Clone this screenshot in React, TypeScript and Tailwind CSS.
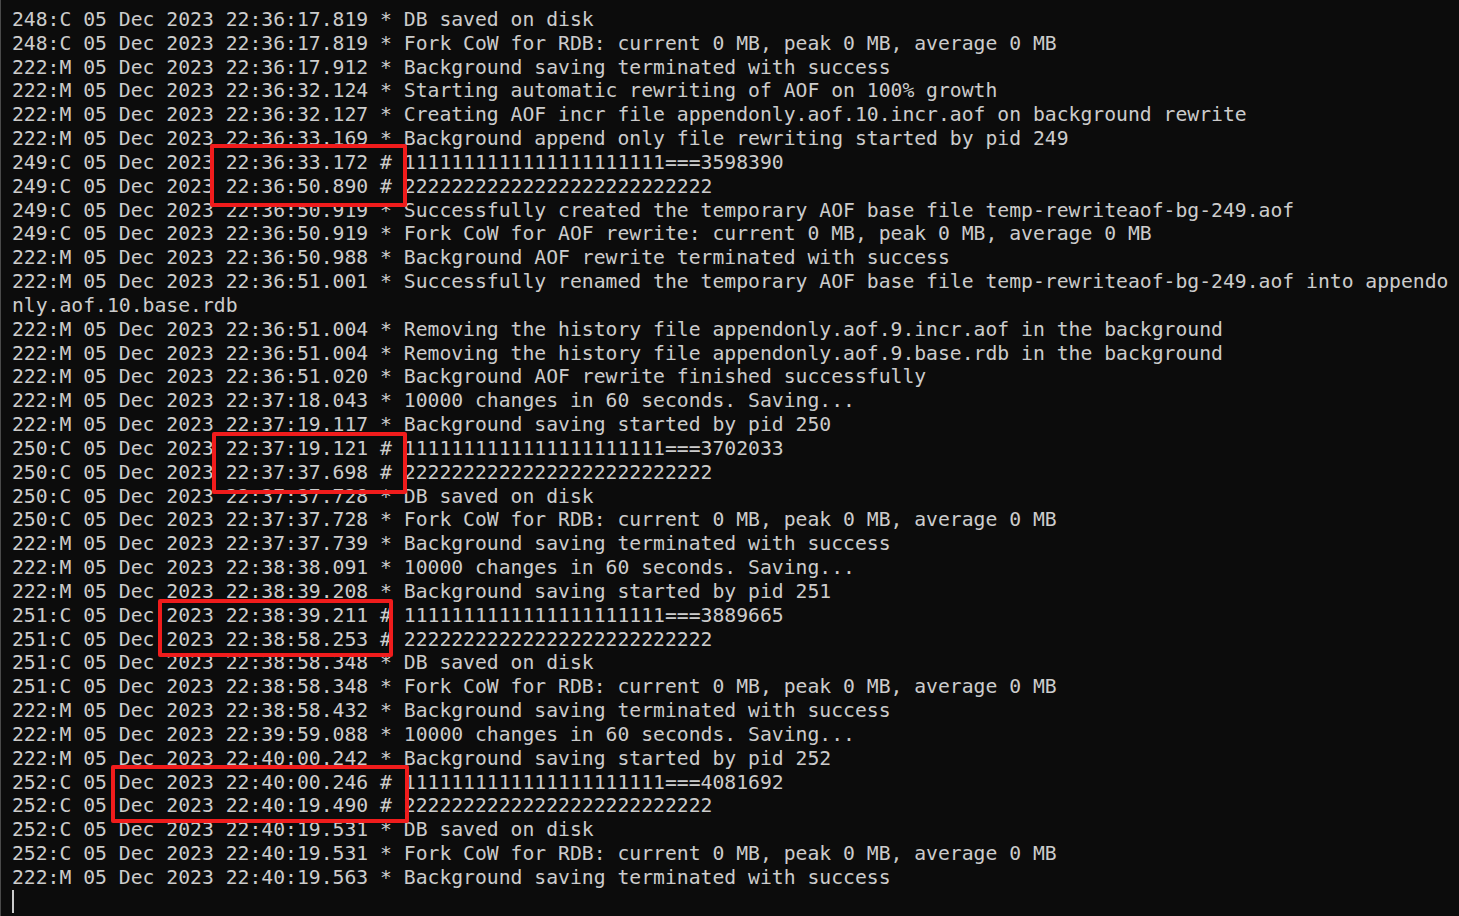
import React from 'react';

const lines: string[] = [
  '248:C 05 Dec 2023 22:36:17.819 * DB saved on disk',
  '248:C 05 Dec 2023 22:36:17.819 * Fork CoW for RDB: current 0 MB, peak 0 MB, average 0 MB',
  '222:M 05 Dec 2023 22:36:17.912 * Background saving terminated with success',
  '222:M 05 Dec 2023 22:36:32.124 * Starting automatic rewriting of AOF on 100% growth',
  '222:M 05 Dec 2023 22:36:32.127 * Creating AOF incr file appendonly.aof.10.incr.aof on background rewrite',
  '222:M 05 Dec 2023 22:36:33.169 * Background append only file rewriting started by pid 249',
  '249:C 05 Dec 2023 22:36:33.172 # 1111111111111111111111===3598390',
  '249:C 05 Dec 2023 22:36:50.890 # 22222222222222222222222222',
  '249:C 05 Dec 2023 22:36:50.919 * Successfully created the temporary AOF base file temp-rewriteaof-bg-249.aof',
  '249:C 05 Dec 2023 22:36:50.919 * Fork CoW for AOF rewrite: current 0 MB, peak 0 MB, average 0 MB',
  '222:M 05 Dec 2023 22:36:50.988 * Background AOF rewrite terminated with success',
  '222:M 05 Dec 2023 22:36:51.001 * Successfully renamed the temporary AOF base file temp-rewriteaof-bg-249.aof into appendo',
  'nly.aof.10.base.rdb',
  '222:M 05 Dec 2023 22:36:51.004 * Removing the history file appendonly.aof.9.incr.aof in the background',
  '222:M 05 Dec 2023 22:36:51.004 * Removing the history file appendonly.aof.9.base.rdb in the background',
  '222:M 05 Dec 2023 22:36:51.020 * Background AOF rewrite finished successfully',
  '222:M 05 Dec 2023 22:37:18.043 * 10000 changes in 60 seconds. Saving...',
  '222:M 05 Dec 2023 22:37:19.117 * Background saving started by pid 250',
  '250:C 05 Dec 2023 22:37:19.121 # 1111111111111111111111===3702033',
  '250:C 05 Dec 2023 22:37:37.698 # 22222222222222222222222222',
  '250:C 05 Dec 2023 22:37:37.728 * DB saved on disk',
  '250:C 05 Dec 2023 22:37:37.728 * Fork CoW for RDB: current 0 MB, peak 0 MB, average 0 MB',
  '222:M 05 Dec 2023 22:37:37.739 * Background saving terminated with success',
  '222:M 05 Dec 2023 22:38:38.091 * 10000 changes in 60 seconds. Saving...',
  '222:M 05 Dec 2023 22:38:39.208 * Background saving started by pid 251',
  '251:C 05 Dec 2023 22:38:39.211 # 1111111111111111111111===3889665',
  '251:C 05 Dec 2023 22:38:58.253 # 22222222222222222222222222',
  '251:C 05 Dec 2023 22:38:58.348 * DB saved on disk',
  '251:C 05 Dec 2023 22:38:58.348 * Fork CoW for RDB: current 0 MB, peak 0 MB, average 0 MB',
  '222:M 05 Dec 2023 22:38:58.432 * Background saving terminated with success',
  '222:M 05 Dec 2023 22:39:59.088 * 10000 changes in 60 seconds. Saving...',
  '222:M 05 Dec 2023 22:40:00.242 * Background saving started by pid 252',
  '252:C 05 Dec 2023 22:40:00.246 # 1111111111111111111111===4081692',
  '252:C 05 Dec 2023 22:40:19.490 # 22222222222222222222222222',
  '252:C 05 Dec 2023 22:40:19.531 * DB saved on disk',
  '252:C 05 Dec 2023 22:40:19.531 * Fork CoW for RDB: current 0 MB, peak 0 MB, average 0 MB',
  '222:M 05 Dec 2023 22:40:19.563 * Background saving terminated with success',
];

// red annotation boxes drawn over the log
const Marks = () => (
  <>
    <div className="absolute left-[209px] top-[144px] w-[197px] h-[63px] border-[4px] border-[#f01c1c] rounded-[2px]" />
    <div className="absolute left-[211px] top-[432px] w-[195px] h-[62px] border-[4px] border-[#f01c1c] rounded-[2px]" />
    <div className="absolute left-[157px] top-[599px] w-[235px] h-[58px] border-[4px] border-[#f01c1c] rounded-[2px]" />
    <div className="absolute left-[110px] top-[765px] w-[298px] h-[58px] border-[4px] border-[#f01c1c] rounded-[2px]" />
  </>
);

export default function App() {
  return (
    <div className="relative w-[1459px] h-[916px] overflow-hidden bg-[#0c0c0c] border-l border-[#4a4a4a]">
      <div
        className="pt-[8px] pl-[11px] text-[#cccccc] text-[19.73px] leading-[23.83px] whitespace-pre"
        style={{ fontFamily: '"DejaVu Sans Mono", "Liberation Mono", monospace' }}
      >
        {lines.map((l, i) => (
          <div key={i} className="h-[23.83px]">{l}</div>
        ))}
        <div className="h-[23.83px] flex items-center">
          <span className="block w-[2px] h-[23px] bg-[#cccccc]" />
        </div>
      </div>
      <Marks />
    </div>
  );
}
